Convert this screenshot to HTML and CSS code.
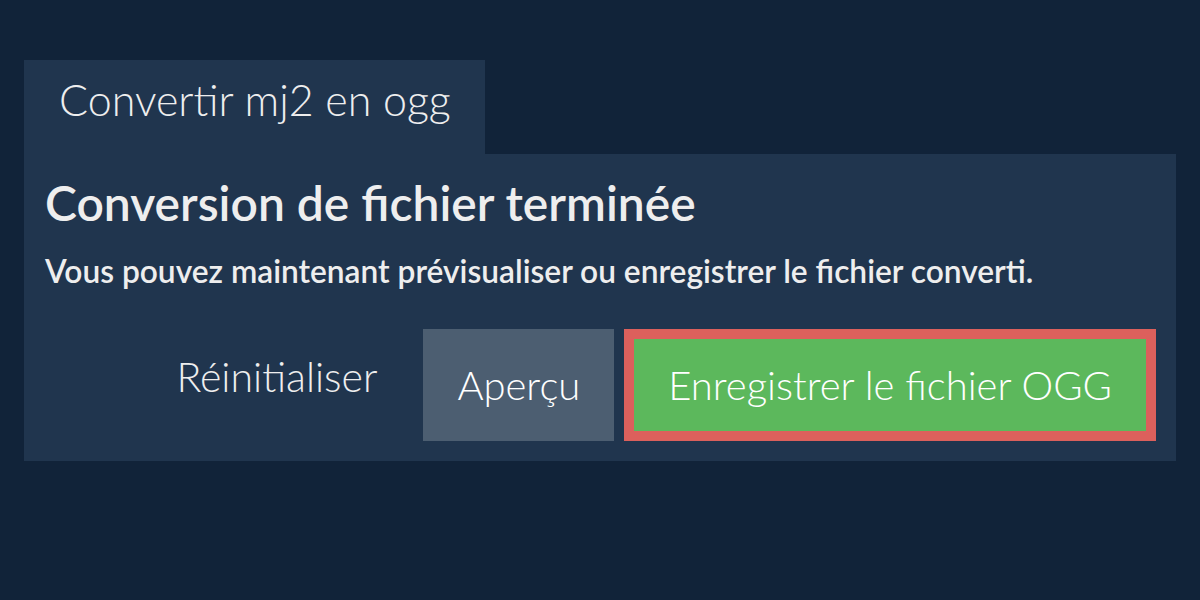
FILE: index.html
```html
<!DOCTYPE html>
<html lang="fr">
<head>
<meta charset="utf-8">
<title>Convertir mj2 en ogg</title>
<link rel="stylesheet" href="styles.css">
</head>
<body>
<main class="page">
  <div class="tab">Convertir mj2 en ogg</div>
  <section class="panel">
    <h1 class="title">Conversion de fichier terminée</h1>
    <p class="subtitle">Vous pouvez maintenant prévisualiser ou enregistrer le fichier converti.</p>
    <div class="actions">
      <button class="btn btn-link">Réinitialiser</button>
      <button class="btn btn-grey">Aperçu</button>
      <button class="btn btn-green">Enregistrer le fichier OGG</button>
    </div>
  </section>
</main>
</body>
</html>
```

FILE: styles.css
```css
html, body {
  margin: 0;
  padding: 0;
  background: #112339;
  width: 1200px;
  height: 600px;
  overflow: hidden;
}
body {
  font-family: Lato, "Open Sans", sans-serif;
  color: #eeeeee;
}
.page {
  padding: 60px 24px 0 24px;
  display: flex;
  flex-direction: column;
  align-items: flex-start;
}
.tab {
  background: #20354e;
  width: 461px;
  height: 94px;
  box-sizing: border-box;
  padding: 16px 0 0 35px;
  font-size: 43px;
  font-weight: 300;
  line-height: 48px;
}
.panel {
  background: #20354e;
  align-self: stretch;
  padding: 21px 20px 20px 21px;
  display: flex;
  flex-direction: column;
}
.title {
  margin: 0;
  font-size: 48px;
  font-weight: 600;
  line-height: 56px;
}
.subtitle {
  margin: 22px 0 0 0;
  font-size: 31.7px;
  font-weight: 600;
  line-height: 36px;
}
.actions {
  margin-top: 40px;
  display: flex;
  justify-content: flex-end;
  gap: 10px;
}
.btn {
  font-family: Lato, "Open Sans", sans-serif;
  font-size: 40px;
  font-weight: 300;
  color: #ffffff;
  border: 10px solid transparent;
  height: 112px;
  padding: 0 25px;
  background: none;
  line-height: 48px;
}
.btn-link {
  color: #eeeeee;
  font-size: 41px;
  padding: 0 26px 16px 26px;
}
.btn-grey {
  background: #4c5e71;
  padding: 0 24px;
}
.btn-green {
  background: #5cb85c;
  border-color: #dc605c;
  padding: 0 34px;
}
```
